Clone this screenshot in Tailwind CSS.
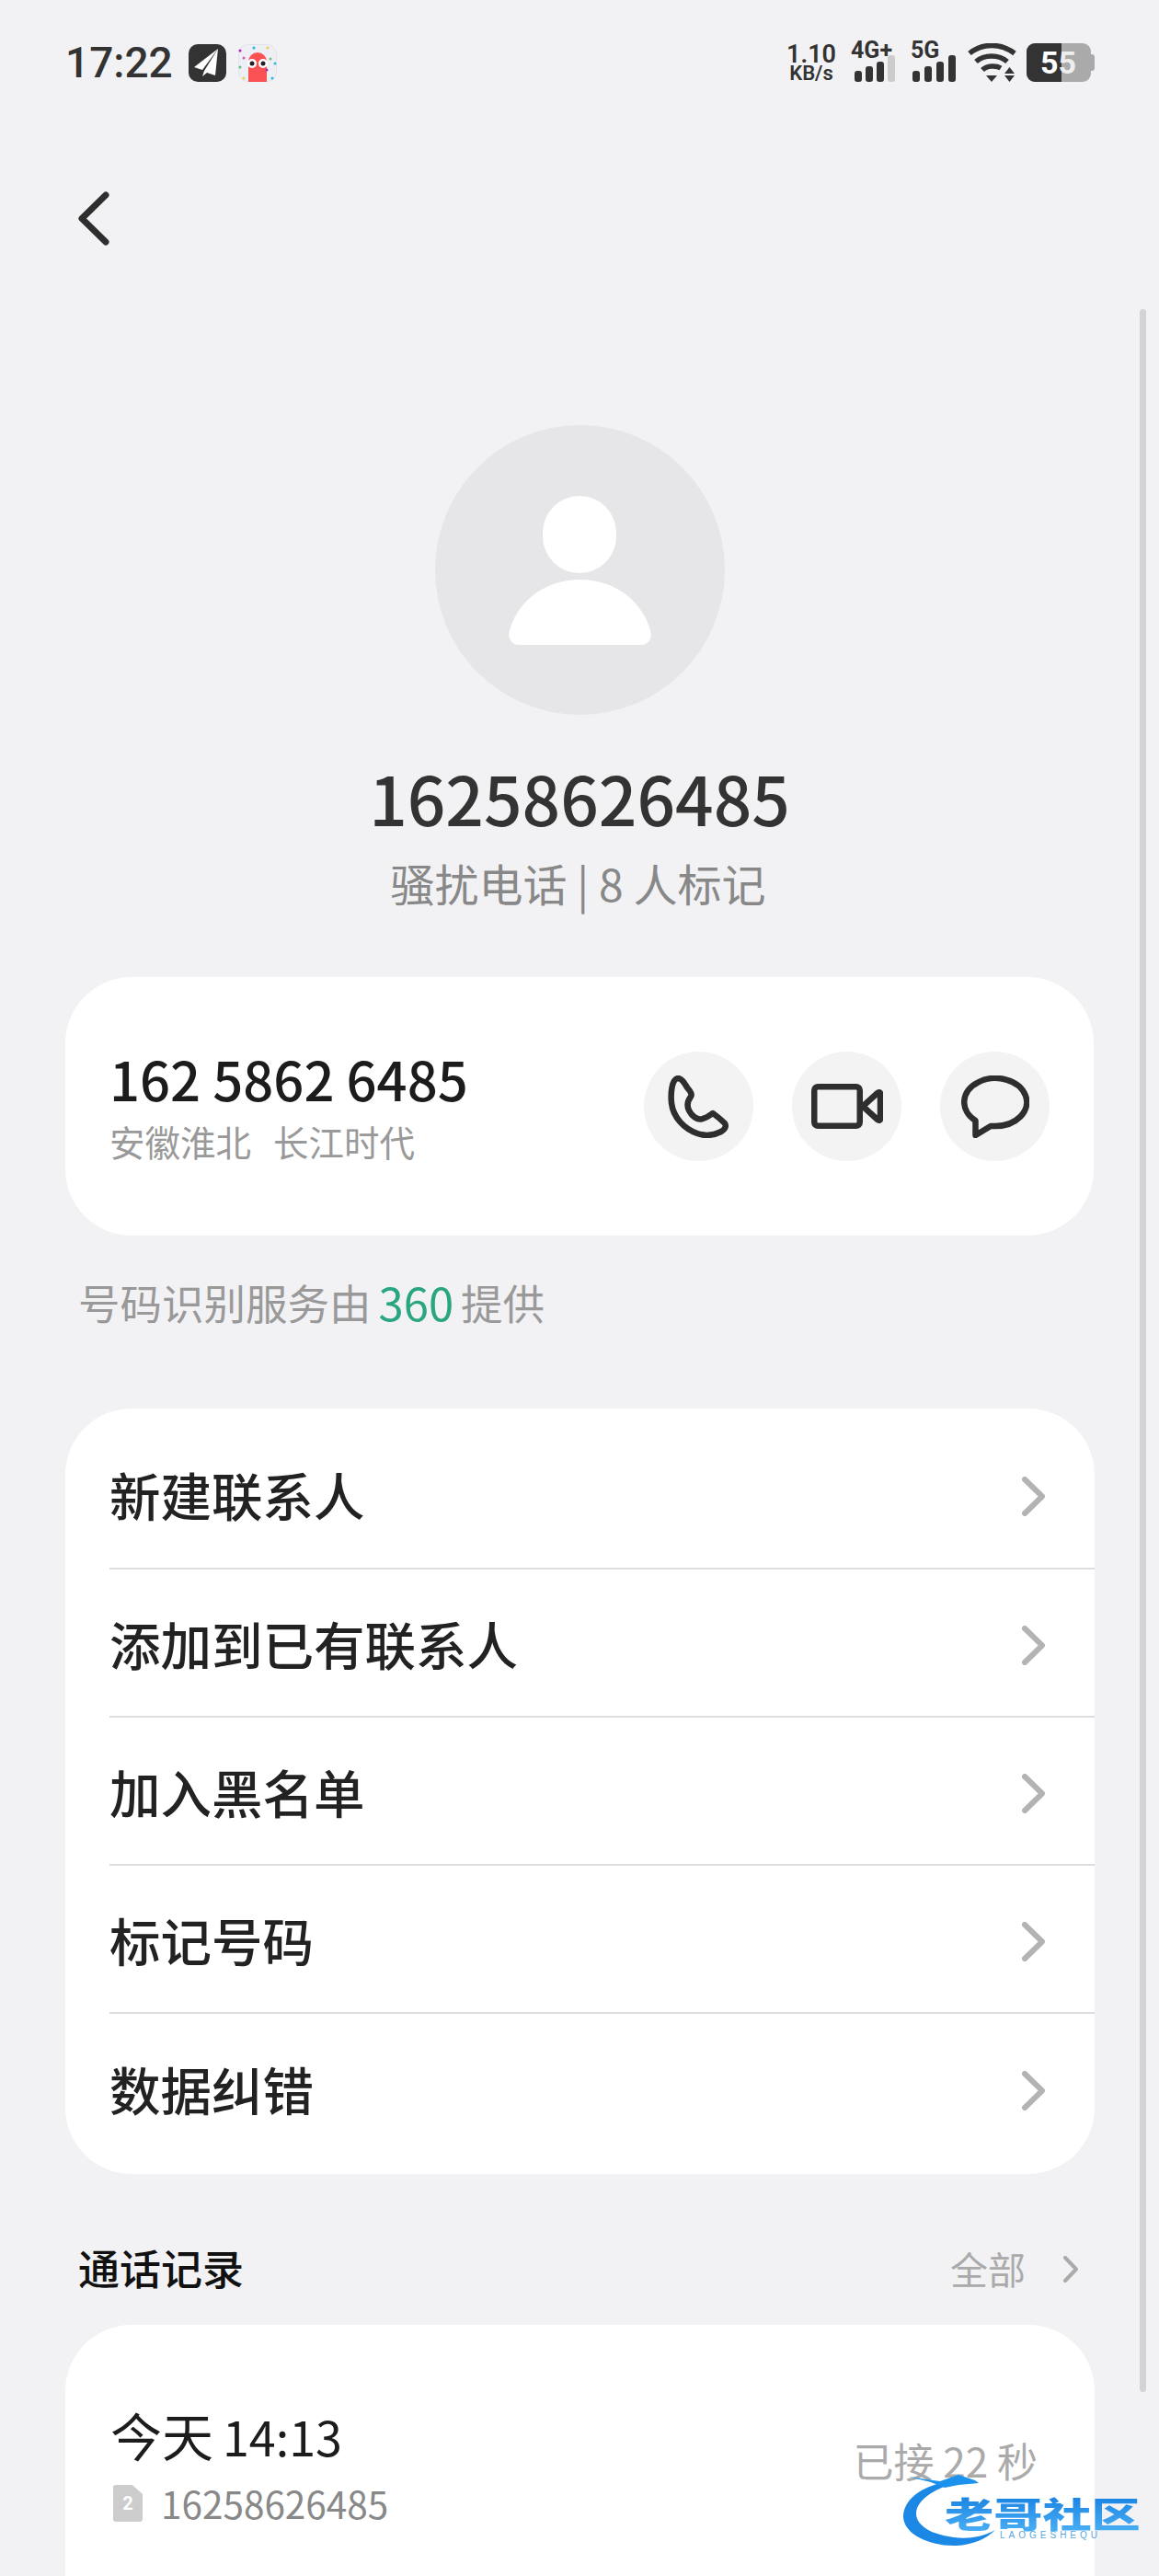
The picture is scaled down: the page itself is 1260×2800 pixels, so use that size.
<!DOCTYPE html>
<html lang="zh-CN">
<head>
<meta charset="UTF-8">
<title>16258626485</title>
<script src="https://cdn.jsdelivr.net/npm/@tailwindcss/browser@4"></script>
</head>
<body class="m-0">
<div class="relative w-[1260px] h-[2800px] overflow-hidden pt-[47px] bg-[#f2f2f4] font-['Noto_Sans_CJK_SC',sans-serif]">

	<!-- status bar -->
	<div class="flex justify-between items-center h-[42px] pl-[71px] pr-[70px] font-['Roboto',sans-serif] text-[#333]">
		<div class="flex items-center">
			<span class="w-[120px] text-[46px] leading-[42px] font-medium">17:22</span>
			<svg class="ml-[14px]" width="41" height="41" viewBox="0 0 41 41">
				<rect width="41" height="41" rx="10" fill="#333"/>
				<path d="M32 5 L6 25 L15 28 Z" fill="#fff"/>
				<path d="M32 5 L17 29 L15 35 L20 31 L29 34 Z" fill="#fff"/>
			</svg>
			<svg class="ml-[13px]" width="42" height="41" viewBox="0 0 42 41">
				<rect x="0.5" y="0.5" width="41" height="40" rx="10" fill="#eeeef5" stroke="#e2e2e8"/>
				<path d="M11 41 V19 A10 10 0 0 1 31 19 V41 Z" fill="#fa5252"/>
				<circle cx="15" cy="21" r="5" fill="#fff"/><circle cx="27" cy="21" r="5" fill="#fff"/>
				<circle cx="15" cy="21" r="2.5" fill="#222"/><circle cx="27" cy="21" r="2.5" fill="#222"/>
				<circle cx="2" cy="7" r="1.5" fill="#b020c0"/><circle cx="17" cy="4" r="1.5" fill="#20b8d8"/>
				<circle cx="32" cy="4" r="1.5" fill="#e8d050"/><circle cx="6" cy="15" r="1.5" fill="#d060b0"/>
				<circle cx="35" cy="16" r="1.5" fill="#70c090"/><circle cx="2" cy="25" r="1.5" fill="#60c080"/>
				<circle cx="40" cy="21" r="1.5" fill="#30b8e0"/><circle cx="31" cy="28" r="1.5" fill="#a030c0"/>
				<circle cx="6" cy="37" r="1.5" fill="#e8d050"/><circle cx="37" cy="37" r="1.5" fill="#30b8e0"/>
			</svg>
		</div>
		<div class="flex items-end h-[42px]">
			<div class="flex flex-col items-center w-[50px] font-semibold">
				<span class="text-[27px] leading-[24px]">1.10</span>
				<span class="text-[22px] leading-[18px]">KB/s</span>
			</div>
			<div class="relative w-[49px] h-[42px] ml-[20px]">
				<span class="absolute left-[-2px] top-[-5px] text-[25px] leading-[26px] font-bold">4G+</span>
				<div class="absolute bottom-0 left-[2px] flex items-end gap-[4px]">
					<div class="w-[8px] h-[12px] rounded-[3px] bg-[#333]"></div>
					<div class="w-[8px] h-[17px] rounded-[3px] bg-[#333]"></div>
					<div class="w-[8px] h-[22px] rounded-[3px] bg-[#333]"></div>
					<div class="w-[8px] h-[29px] rounded-[3px] bg-[#ccc]"></div>
				</div>
			</div>
			<div class="relative w-[49px] h-[42px] ml-[14px]">
				<span class="absolute left-0 top-[-5px] text-[25px] leading-[26px] font-bold">5G</span>
				<div class="absolute bottom-0 left-[2px] flex items-end gap-[5px]">
					<div class="w-[8px] h-[12px] rounded-[3px] bg-[#333]"></div>
					<div class="w-[8px] h-[17px] rounded-[3px] bg-[#333]"></div>
					<div class="w-[8px] h-[22px] rounded-[3px] bg-[#333]"></div>
					<div class="w-[8px] h-[29px] rounded-[3px] bg-[#333]"></div>
				</div>
			</div>
			<svg class="ml-[13px]" width="53" height="42" viewBox="0 0 53 42" fill="none" stroke="#333" stroke-width="5.5">
				<path d="M2 11 C16 -0.5 36 -0.5 51 11"/>
				<path d="M9 20 C18 12 34 12 43 20"/>
				<path d="M16 29 C21 24 31 24 36 27"/>
				<path d="M20 35 H32 L26 42 Z" fill="#333" stroke="none"/>
				<path d="M40 33 L45.500 26 L51 33 Z" fill="#333" stroke="none"/>
				<path d="M40 35 H51 L45.500 42 Z" fill="#333" stroke="none"/>
			</svg>
			<div class="relative w-[74px] h-[42px] ml-[11px]">
				<div class="absolute right-0 top-[12px] w-[8px] h-[18px] rounded-[3px] bg-[#aaa]"></div>
				<div class="absolute left-0 top-0 w-[70px] h-[42px] rounded-[9px] overflow-hidden bg-[#aaa]">
					<div class="w-[38px] h-[42px] bg-[#333]"></div>
				</div>
				<div class="absolute left-[15px] top-0 flex h-[42px] items-center text-[34px] leading-[42px] font-bold text-white">
					<span>5</span><span class="text-[#eee]">5</span>
				</div>
			</div>
		</div>
	</div>

	<!-- back -->
	<div class="mt-[119px] pl-[85px] h-[59px]">
		<svg width="34" height="59" viewBox="0 0 34 59" fill="none" stroke="#2e2e2e" stroke-width="7" stroke-linecap="round" stroke-linejoin="round">
			<path d="M30 4 L4 29.500 L30 55"/>
		</svg>
	</div>

	<!-- avatar -->
	<div class="flex justify-center mt-[195px]">
		<div class="flex flex-col items-center w-[315px] h-[315px] rounded-full bg-[#e6e6e8]">
			<div class="w-[80px] h-[84px] mt-[77px] rounded-full bg-white"></div>
			<svg class="mt-[7px]" width="155" height="71" viewBox="0 0 155 71">
				<path d="M77.500 0 C36 0 8 27 0.500 57 C-1 65 4 71 11 71 H144 C151 71 156 65 154.500 57 C147 27 119 0 77.500 0 Z" fill="#fff"/>
			</svg>
		</div>
	</div>

	<div class="mt-[44px] text-center text-[73px] leading-[90px] font-medium text-[#333]">16258626485</div>
	<div class="mt-[18px] pr-[3px] text-center text-[48px] leading-[60px] text-[#888]">骚扰电话 | 8 人标记</div>

	<!-- number card -->
	<div class="flex items-center justify-between w-[1118px] h-[281px] mt-[73px] ml-[71px] pl-[48px] pr-[48px] rounded-[72px] bg-white">
		<div class="mt-[2px]">
			<div class="text-[58px] leading-[60px] font-medium text-[#1c1c1c]">162 5862 6485</div>
			<div class="flex gap-[24px] mt-[13px] text-[38.500px] leading-[50px] text-[#999]">
				<span>安徽淮北</span><span>长江时代</span>
			</div>
		</div>
		<div class="flex gap-[42px]">
			<div class="flex items-center justify-center w-[119px] h-[119px] rounded-full bg-[#f3f3f3]">
				<svg width="67" height="68" viewBox="0 0 67 68" fill="none" stroke="#2e2e2e" stroke-width="6.500" stroke-linejoin="round">
					<path d="M11 3 C15 3 18 8 21 13 C24 17 27 20 25 23 C22 27 20 32 23 38 C26 44 32 49 38 47 C42 46 46 43 49 41 C53 44 59 49 62 52 C64 55 62 59 58 61 C50 65 40 66 32 63 C18 58 6 46 4 30 C3 20 4 4 11 3 Z"/>
				</svg>
			</div>
			<div class="flex items-center justify-center w-[119px] h-[119px] rounded-full bg-[#f3f3f3]">
				<svg width="78" height="49" viewBox="0 0 78 49" fill="none" stroke="#2e2e2e" stroke-width="6.500" stroke-linejoin="round">
					<rect x="3.250" y="3.250" width="49.500" height="42.500" rx="4"/>
					<path d="M56 24.500 L72 10 Q75 8 75 11 V38 Q75 41 72 39 Z"/>
				</svg>
			</div>
			<div class="flex items-center justify-center w-[119px] h-[119px] rounded-full bg-[#f3f3f3]">
				<svg width="74" height="68" viewBox="0 0 74 68" fill="none" stroke="#2e2e2e" stroke-width="6.500" stroke-linejoin="round">
					<path d="M15.500 49 A34 26 0 1 1 37 55 L32 55 L15.500 65 Z"/>
				</svg>
			</div>
		</div>
	</div>

	<div class="flex items-center mt-[42px] pl-[85px] h-[60px] text-[45.500px] leading-[60px] text-[#999]">
		<span>号码识别服务由</span><span class="ml-[8px] mr-[8px] text-[49px] text-[#2aa582]">360</span><span>提供</span>
	</div>

	<!-- action list -->
	<div class="w-[1119px] h-[832px] mt-[86px] ml-[71px] pl-[48px] rounded-[72px] bg-white text-[55.500px] leading-[70px] font-medium text-[#222]">
		<div class="flex items-center justify-between h-[175px] pt-[13px] pr-[54px] border-b-2 border-[#dedede]">
			<span>新建联系人</span>
			<svg class="mt-[5px]" width="25" height="43" viewBox="0 0 25 43" fill="none" stroke="#b3b3b3" stroke-width="6" stroke-linecap="round" stroke-linejoin="round"><path d="M3 3 L22 21.500 L3 40"/></svg>
		</div>
		<div class="flex items-center justify-between h-[161px] pr-[54px] border-b-2 border-[#dedede]">
			<span>添加到已有联系人</span>
			<svg class="mt-[5px]" width="25" height="43" viewBox="0 0 25 43" fill="none" stroke="#b3b3b3" stroke-width="6" stroke-linecap="round" stroke-linejoin="round"><path d="M3 3 L22 21.500 L3 40"/></svg>
		</div>
		<div class="flex items-center justify-between h-[161px] pr-[54px] border-b-2 border-[#dedede]">
			<span>加入黑名单</span>
			<svg class="mt-[5px]" width="25" height="43" viewBox="0 0 25 43" fill="none" stroke="#b3b3b3" stroke-width="6" stroke-linecap="round" stroke-linejoin="round"><path d="M3 3 L22 21.500 L3 40"/></svg>
		</div>
		<div class="flex items-center justify-between h-[161px] pr-[54px] border-b-2 border-[#dedede]">
			<span>标记号码</span>
			<svg class="mt-[5px]" width="25" height="43" viewBox="0 0 25 43" fill="none" stroke="#b3b3b3" stroke-width="6" stroke-linecap="round" stroke-linejoin="round"><path d="M3 3 L22 21.500 L3 40"/></svg>
		</div>
		<div class="flex items-center justify-between h-[174px] pb-[13px] pr-[54px]">
			<span>数据纠错</span>
			<svg class="mt-[5px]" width="25" height="43" viewBox="0 0 25 43" fill="none" stroke="#b3b3b3" stroke-width="6" stroke-linecap="round" stroke-linejoin="round"><path d="M3 3 L22 21.500 L3 40"/></svg>
		</div>
	</div>

	<!-- call log -->
	<div class="flex items-center justify-between h-[60px] mt-[72px] pl-[85px] pr-[88px]">
		<span class="text-[45px] leading-[60px] font-medium text-[#111]">通话记录</span>
		<div class="flex items-center gap-[41px]">
			<span class="text-[41px] leading-[60px] text-[#aaa]">全部</span>
			<svg class="mt-[2px]" width="16" height="29" viewBox="0 0 16 29" fill="none" stroke="#aaa" stroke-width="4" stroke-linecap="round" stroke-linejoin="round"><path d="M2 2 L14 14.500 L2 27"/></svg>
		</div>
	</div>
	<div class="flex justify-between w-[1119px] h-[400px] mt-[32px] ml-[71px] pt-[84px] pl-[49px] pr-[62px] rounded-[72px] bg-white">
		<div>
			<div class="flex items-baseline text-[56px] leading-[70px] text-[#1c1c1c]"><span>今天</span><span class="ml-[10px] text-[52px]">14:13</span></div>
			<div class="flex items-center gap-[20px] mt-[13px] pl-[3px]">
				<div class="relative flex items-center justify-center w-[32px] h-[40px] rounded-[3px] bg-[#ccc] [clip-path:polygon(0_0,65%_0,100%_25%,100%_100%,0_100%)]">
					<span class="font-['Roboto',sans-serif] text-[20px] font-bold text-white">2</span>
				</div>
				<span class="text-[40.500px] leading-[50px] text-[#888]">16258626485</span>
			</div>
		</div>
		<div class="mt-[33px] text-[44px] leading-[60px] text-[#aaa]">已接 22 秒</div>
	</div>

	<!-- scrollbar -->
	<div class="absolute left-[1239px] top-[336px] w-[7px] h-[2264px] rounded-[4px] bg-[#d3d3d6]"></div>

	<!-- watermark -->
	<div class="absolute left-[982px] top-[2690px] w-[260px] h-[80px]">
		<svg class="absolute left-0 top-0" width="110" height="80" viewBox="0 0 110 80">
			<path d="M45 8 C15 14 0 30 0 45 C0 65 30 78 58 77 C75 76 90 70 100 60 C85 68 70 70 55 68 C30 65 14 55 14 42 C14 30 28 18 52 10 Z" fill="#1b88e6"/>
			<path d="M5 2 L40 7 L60 0 L78 6 L82 9 L60 11 L45 14 L30 8 Z" fill="#1b93ee"/>
		</svg>
		<span class="absolute left-[45px] top-[18px] origin-left scale-x-[1.4] whitespace-nowrap text-[38px] leading-[46px] font-black text-transparent bg-clip-text bg-linear-to-b from-[#0f7ee0] to-[#4bb0f5]">老哥社区</span>
		<span class="absolute left-[105px] top-[60px] whitespace-nowrap font-['Liberation_Sans',sans-serif] text-[10px] leading-[12px] tracking-[4px] text-[#5aa5dd]">LAOGESHEQU</span>
	</div>
</div>
</body>
</html>
